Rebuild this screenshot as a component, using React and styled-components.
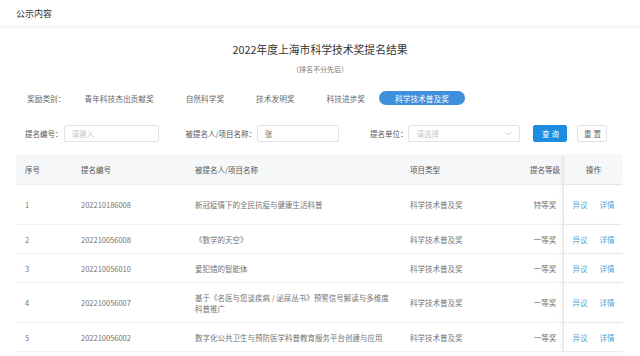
import React from "react";
import styled, { createGlobalStyle } from "styled-components";

const Global = createGlobalStyle`
  html, body { margin: 0; padding: 0; background: #fff; }
  body { font-family: "Noto Sans CJK SC", "Noto Sans", sans-serif; color: #606266; }
  * { box-sizing: border-box; }
`;

const Page = styled.div`
  width: 640px;
  height: 356px;
  overflow: hidden;
  background: #fff;
`;

const TopBar = styled.div`
  height: 27px;
  display: flex;
  align-items: center;
  padding-left: 16px;
  font-size: 9px;
  color: #333;
  border-bottom: 1px solid #f1f1f1;
  box-shadow: 0 2px 3px rgba(0, 0, 0, 0.03);
`;

const Title = styled.h1`
  margin: 14px 0 0;
  text-align: center;
  font-weight: 400;
  font-size: 10.8px;
  line-height: 16px;
  color: #333;
`;

const Subtitle = styled.div`
  margin-top: 7px;
  text-align: center;
  font-size: 7px;
  line-height: 10px;
  color: #777;
`;

const Categories = styled.div`
  margin-top: 17px;
  display: flex;
  align-items: center;
  padding-left: 27px;
  height: 14px;
  font-size: 7.7px;
`;

const CatLabel = styled.span`
  color: #666;
  margin-right: 3px;
`;

const Tab = styled.span`
  height: 14px;
  display: flex;
  align-items: center;
  padding: 0 16px;
  border-radius: 7px;
  color: ${(p) => (p.$active ? "#fff" : "#666")};
  background: ${(p) => (p.$active ? "#3f8fdd" : "transparent")};
  margin-left: ${(p) => (p.$active ? "-2px" : "0")};
`;

const Search = styled.div`
  margin-top: 20px;
  display: flex;
  align-items: center;
  padding-left: 25px;
  height: 17px;
  font-size: 7.5px;
`;

const Label = styled.span`
  color: #555;
  margin-left: ${(p) => p.$ml || 0}px;
  margin-right: 1px;
  white-space: nowrap;
`;

const Input = styled.div`
  width: ${(p) => p.$w}px;
  height: 17px;
  border: 1px solid #e2e2e2;
  border-radius: 2px;
  display: flex;
  align-items: center;
  justify-content: space-between;
  padding: 0 7px;
  color: ${(p) => (p.$placeholder ? "#c4c7cc" : "#666")};
  font-size: 7.5px;
`;

const Chevron = styled.svg`
  width: 7px;
  height: 5px;
`;

const Button = styled.button`
  margin-left: ${(p) => p.$ml}px;
  width: ${(p) => p.$w}px;
  height: 17px;
  border-radius: 2px;
  font-family: inherit;
  font-size: 7.5px;
  letter-spacing: 2px;
  padding: 0 0 0 2px;
  border: 1px solid ${(p) => (p.$primary ? "#1e8ce0" : "#e2e2e2")};
  background: ${(p) => (p.$primary ? "#1e8ce0" : "#fff")};
  color: ${(p) => (p.$primary ? "#fff" : "#666")};
`;

const Table = styled.div`
  margin: 13px 16px 0;
  width: 607px;
  font-size: 7.5px;
`;

const cols = "56px 114px 215px 126px 36px 60px";

const HeadRow = styled.div`
  display: grid;
  grid-template-columns: ${cols};
  height: 30px;
  background: #f6f7f8;
  color: #555;
  border-bottom: 1px solid #eeeeee;
`;

const Row = styled.div`
  display: grid;
  grid-template-columns: ${cols};
  height: ${(p) => p.$h}px;
  border-bottom: 1px solid #efefef;
  color: #747474;
`;

const Cell = styled.div`
  display: flex;
  flex-direction: ${(p) => (p.$stack ? "column" : "row")};
  align-items: ${(p) => (p.$stack ? "flex-start" : "center")};
  padding-left: ${(p) => (p.$align ? 0 : 9)}px;
  justify-content: ${(p) => (p.$align === "center" || p.$stack ? "center" : "flex-start")};
  line-height: 11px;
  white-space: nowrap;
`;

const OpCell = styled.div`
  display: flex;
  align-items: center;
  justify-content: center;
  gap: 12px;
  border-left: 1px solid #e3e3e3;
  box-shadow: -2px 0 3px rgba(0, 0, 0, 0.05);
`;

const Link = styled.span`
  color: #4f9fd6;
`;

const rows = [
  ["1", "202210186008", ["新冠疫情下的全民抗疫与健康生活科普"], "特等奖", 40],
  ["2", "202210056008", ["《数学的天空》"], "一等奖", 29],
  ["3", "202210056010", ["爱犯错的智能体"], "一等奖", 29],
  ["4", "202210056007", ["基于《名医与您谈疾病 / 泌尿丛书》预警信号解读与多维度", "科普推广"], "一等奖", 40],
  ["5", "202210056002", ["数字化公共卫生与预防医学科普教育服务平台创建与应用"], "一等奖", 29],
];

export default function App() {
  return (
    <Page>
      <Global />
      <TopBar>公示内容</TopBar>
      <Title>2022年度上海市科学技术奖提名结果</Title>
      <Subtitle>（排名不分先后）</Subtitle>
      <Categories>
        <CatLabel>奖励类别：</CatLabel>
        <Tab>青年科技杰出贡献奖</Tab>
        <Tab>自然科学奖</Tab>
        <Tab>技术发明奖</Tab>
        <Tab>科技进步奖</Tab>
        <Tab $active>科学技术普及奖</Tab>
      </Categories>
      <Search>
        <Label>提名编号：</Label>
        <Input $w={95} $placeholder>请输入</Input>
        <Label $ml={27}>被提名人/项目名称：</Label>
        <Input $w={82}>张</Input>
        <Label $ml={31}>提名单位：</Label>
        <Input $w={112} $placeholder>
          请选择
          <Chevron viewBox="0 0 7 5">
            <path d="M0.5 1 L3.5 4 L6.5 1" fill="none" stroke="#c4c7cc" strokeWidth="0.9" />
          </Chevron>
        </Input>
        <Button $primary $ml={13} $w={34}>查询</Button>
        <Button $ml={10} $w={30}>重置</Button>
      </Search>
      <Table>
        <HeadRow>
          <Cell>序号</Cell>
          <Cell>提名编号</Cell>
          <Cell>被提名人/项目名称</Cell>
          <Cell>项目类型</Cell>
          <Cell $align="center">提名等级</Cell>
          <OpCell>操作</OpCell>
        </HeadRow>
        {rows.map(([n, code, name, rank, h]) => (
          <Row key={n} $h={h}>
            <Cell>{n}</Cell>
            <Cell>{code}</Cell>
            <Cell $stack>
              {name.map((l) => (
                <span key={l}>{l}</span>
              ))}
            </Cell>
            <Cell>科学技术普及奖</Cell>
            <Cell $align="center">{rank}</Cell>
            <OpCell>
              <Link>异议</Link>
              <Link>详情</Link>
            </OpCell>
          </Row>
        ))}
      </Table>
    </Page>
  );
}
